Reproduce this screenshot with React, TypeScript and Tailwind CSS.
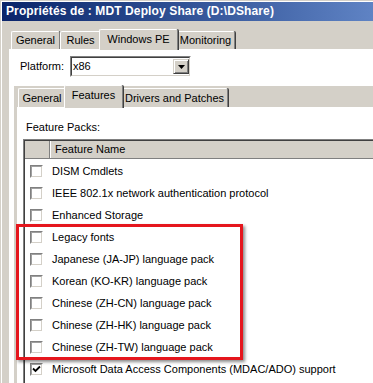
import React from "react";

const features = [
  { name: "DISM Cmdlets", checked: false },
  { name: "IEEE 802.1x network authentication protocol", checked: false },
  { name: "Enhanced Storage", checked: false },
  { name: "Legacy fonts", checked: false },
  { name: "Japanese (JA-JP) language pack", checked: false },
  { name: "Korean (KO-KR) language pack", checked: false },
  { name: "Chinese (ZH-CN) language pack", checked: false },
  { name: "Chinese (ZH-HK) language pack", checked: false },
  { name: "Chinese (ZH-TW) language pack", checked: false },
  { name: "Microsoft Data Access Components (MDAC/ADO) support", checked: true },
];

function Tab({
  label,
  className,
  active,
  small,
}: {
  label: string;
  className: string;
  active?: boolean;
  small?: boolean;
}) {
  if (active) {
    // selected tab sticks out 2px on each side and covers the panel's top edge
    return (
      <div
        className={`relative z-10 -mx-[2px] -mb-px shrink-0 flex justify-center bg-[#d4d0c8] border-t border-l border-white border-r border-r-[#808080] shadow-[1px_0_0_#404040] rounded-t-[2px] ${
          small ? "h-[23px] pt-[3px]" : "h-[21px] pt-[3px]"
        } ${className}`}
      >
        {label}
      </div>
    );
  }
  return (
    <div
      className={`shrink-0 flex items-center justify-center bg-[#d4d0c8] border-t border-l border-white border-r border-r-[#808080] shadow-[1px_0_0_#404040] rounded-t-[2px] ${
        small ? "h-[19px]" : "h-[18px]"
      } ${className}`}
    >
      {label}
    </div>
  );
}

function CheckBox({ checked }: { checked: boolean }) {
  return (
    <div className="w-[13px] h-[13px] shrink-0 border border-t-[#808080] border-l-[#808080] border-b-white border-r-white">
      <div className="w-full h-full flex items-center justify-center bg-white border border-t-[#a0a0a0] border-l-[#a0a0a0] border-b-[#d4d0c8] border-r-[#d4d0c8]">
        {checked && (
          <svg width="9" height="9" viewBox="0 0 9 9">
            <path d="M1 3.5 L3.5 6 L8 1.5" fill="none" stroke="#000" strokeWidth="1.8" />
          </svg>
        )}
      </div>
    </div>
  );
}

export default function App() {
  return (
    <div className="relative w-[373px] h-[383px] overflow-hidden bg-[#d4d0c8] font-['Liberation_Sans',Arial,sans-serif] text-[11px] leading-[13px] text-black">
      <div className="h-full pl-px pt-px">
        <div className="h-full flex flex-col border-l border-t border-white">
          {/* Title bar */}
          <div className="h-[19px] shrink-0 flex items-center pl-[4px] bg-linear-to-r from-[#0a246a] to-[#5f83c4] text-white font-bold text-[12px] tracking-[0.12px] whitespace-nowrap">
            {"Propriétés de : MDT Deploy Share (D:\\DShare)"}
          </div>

          {/* Outer tabs */}
          <div className="mt-[8px] ml-[7px] h-[20px] shrink-0 flex items-end pl-[2px]">
            <Tab label="General" className="w-[49px]" />
            <Tab label="Rules" className="w-[41px]" />
            <Tab label="Windows PE" className="w-[79px]" active />
            <Tab label="Monitoring" className="w-[59px]" />
          </div>

          {/* Outer panel */}
          <div className="ml-[7px] flex-1 flex flex-col bg-white border-t border-l border-white">
            <div className="h-[36px] shrink-0 flex items-start pt-[6px] pl-[10px]">
              <div className="w-[50px] h-[21px] flex items-center">Platform:</div>
              <div className="w-[121px] h-[21px] border border-t-[#808080] border-l-[#808080] border-b-white border-r-white">
                <div className="w-full h-full flex items-center bg-white border border-t-[#404040] border-l-[#404040] border-b-[#d4d0c8] border-r-[#d4d0c8]">
                  <span className="flex-1 pl-[1px]">x86</span>
                  <div className="w-[16px] h-[15px] flex items-center justify-center bg-[#d4d0c8] border border-t-[#d4d0c8] border-l-[#d4d0c8] border-b-[#404040] border-r-[#404040] shadow-[inset_1px_1px_0_#fff,inset_-1px_-1px_0_#808080]">
                    <svg width="7" height="4" viewBox="0 0 7 4">
                      <path d="M0 0 H7 L3.5 4 Z" fill="#000" />
                    </svg>
                  </div>
                </div>
              </div>
            </div>

            {/* Inner tab control */}
            <div className="ml-[4px] flex-1 flex flex-col bg-[#d4d0c8]">
              <div className="h-[21px] shrink-0 flex items-end pl-[4px]">
                <Tab label="General" className="w-[48px]" small />
                <Tab label="Features" className="w-[59px]" active small />
                <Tab label="Drivers and Patches" className="w-[107px]" small />
              </div>

              <div className="ml-[3px] flex-1 flex flex-col bg-white border-t border-l border-white">
                <div className="mt-[13px] pl-[8px] h-[13px]">Feature Packs:</div>

                {/* List view */}
                <div className="mt-[5px] ml-[5px] flex-1 border-t border-l border-[#808080]">
                  <div className="h-full border-t border-l border-[#404040] bg-white">
                    <div className="h-[18px] flex bg-[#d4d0c8] border-b border-b-[#808080]">
                      <div className="w-[25px] border-r border-r-[#808080]" />
                      <div className="flex-1 flex items-center pl-[4px] border-l border-l-white">
                        Feature Name
                      </div>
                    </div>
                    <div className="mt-px">
                      {features.map((f) => (
                        <div key={f.name} className="h-[22px] flex items-center pl-[5px] whitespace-nowrap">
                          <CheckBox checked={f.checked} />
                          <span className="ml-[9px]">{f.name}</span>
                        </div>
                      ))}
                    </div>
                  </div>
                </div>
              </div>
            </div>
          </div>
        </div>
      </div>

      {/* Red highlight frame */}
      <div className="absolute left-[16px] top-[224px] w-[227px] h-[136px] border-[3px] border-[#e5161d] shadow-[2px_2px_3px_rgba(0,0,0,0.45)]" />
    </div>
  );
}
